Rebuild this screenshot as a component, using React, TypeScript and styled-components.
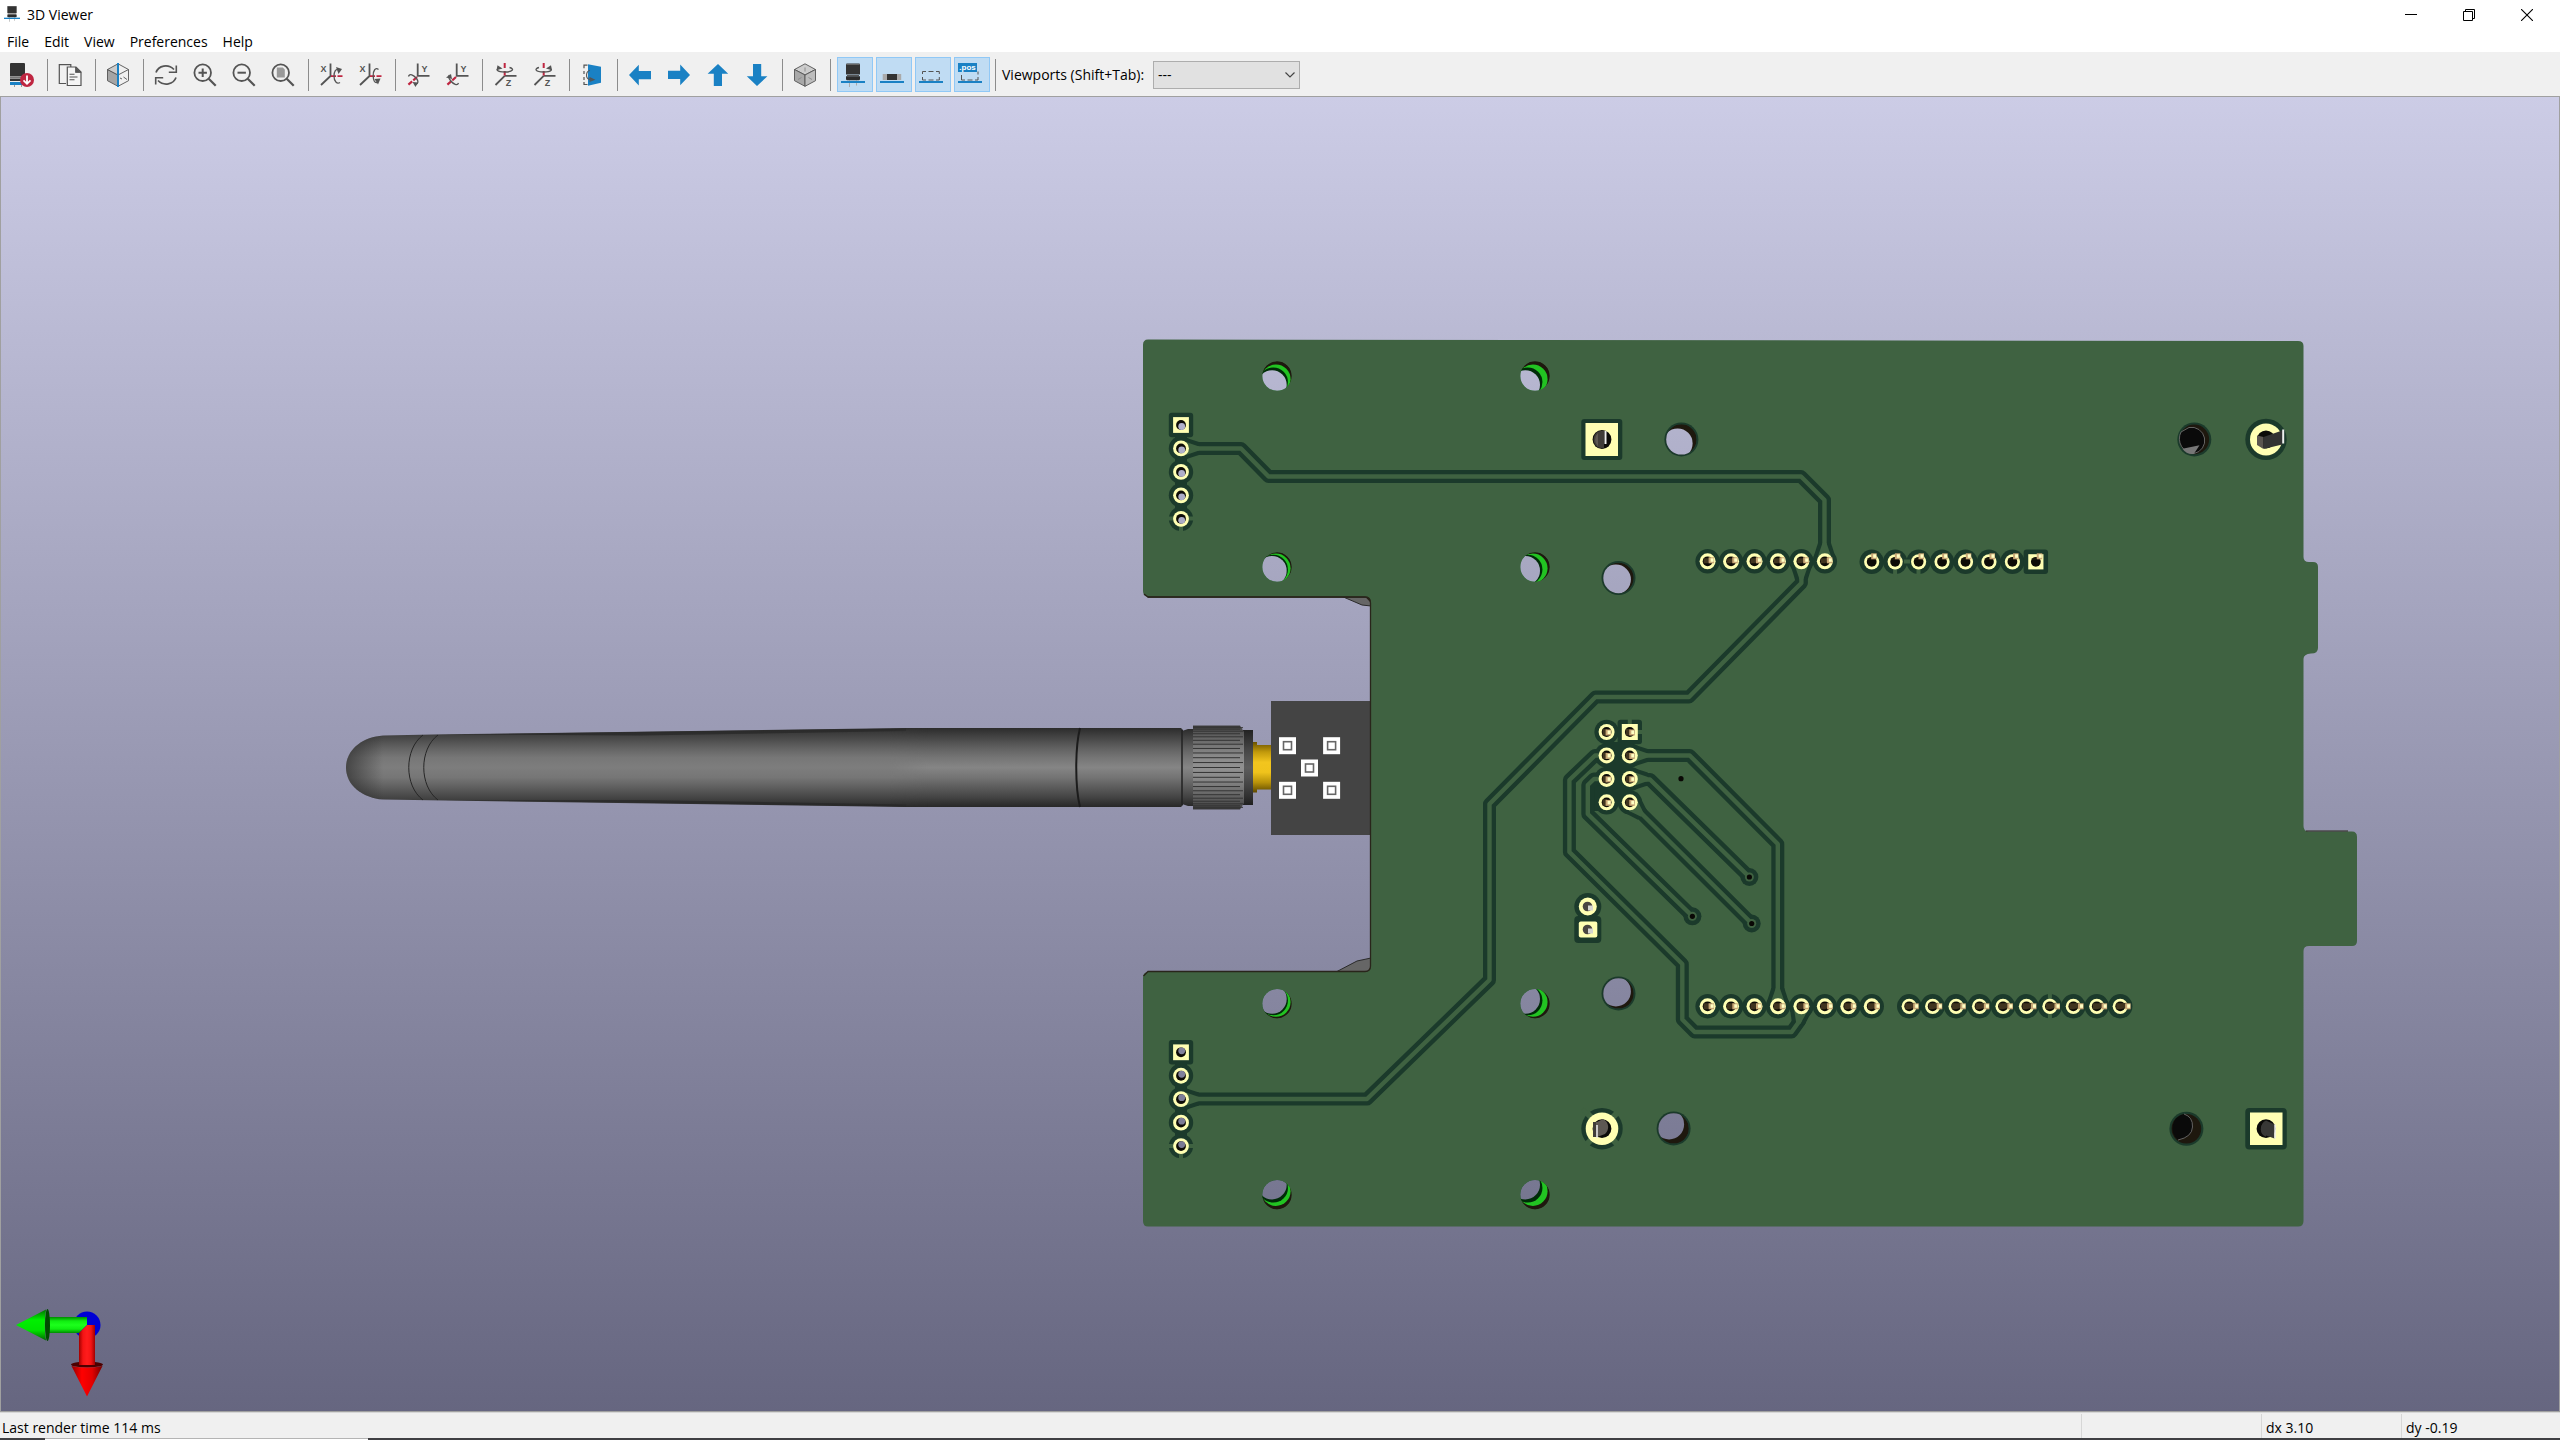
import React from "react";
import styled, { createGlobalStyle } from "styled-components";

const INK = "#545454";
const RED = "#bf2641";
const BLUE = "#1a81c4";
const BOARD = "#3f6241";
const CLEAR = "#1b3a2b";
const COPPER = "#ffffb3";
const BARREL = "#1e180e";

const Global = createGlobalStyle`
  * { box-sizing: border-box; }
  body { margin: 0; background: #f0f0f0; }
`;

const Window = styled.div`
  display: flex;
  flex-direction: column;
  height: 100vh;
  overflow: hidden;
  color: #000;
  font-family: "Open Sans", "Noto Sans", sans-serif;
  font-size: 14px;
  line-height: 20px;
`;

const TitleBar = styled.header`
  display: flex;
  align-items: center;
  height: 30px;
  padding: 0 4px;
  background: #fff;
`;

const AppIcon = styled.svg`
  width: 16px;
  height: 20px;
`;

const Title = styled.h1`
  flex: 1;
  margin: 0 0 0 7px;
  font: inherit;
`;

const CaptionButton = styled.button`
  display: grid;
  place-items: center;
  width: 58px;
  height: 28px;
  padding: 0;
  border: 0;
  background: none;
  svg { width: 12px; height: 12px; }
`;

const MenuBar = styled.nav`
  display: flex;
  gap: 1px;
  height: 22px;
  padding-top: 1px;
  background: #fff;
`;

const MenuItem = styled.button`
  padding: 0 7px;
  border: 0;
  background: none;
  color: inherit;
  font: inherit;
`;

const Toolbar = styled.div`
  display: flex;
  align-items: center;
  gap: 3px;
  height: 44px;
  padding: 1px 0 0 6px;
  background: #f0f0f0;
`;

const ToolButton = styled.button<{ $on?: boolean }>`
  flex: none;
  display: flex;
  width: 36px;
  height: 35px;
  padding: 5px 3px;
  border: 1px solid ${(p) => (p.$on ? "#90c8f6" : "transparent")};
  background: ${(p) => (p.$on ? "#c0dcf3" : "none")};
  svg { width: 24px; height: 24px; overflow: visible; }
`;

const Divider = styled.span`
  flex: none;
  width: 1px;
  height: 32px;
  margin: 0 3px 0 2px;
  background: #8c8c8c;
`;

const ViewportLabel = styled.label`
  margin: 0 6px 0 0;
  white-space: nowrap;
`;

const SelectBox = styled.div`
  display: grid;
  width: 147px;
  height: 28px;
  > * { grid-area: 1 / 1; }
  svg {
    justify-self: end;
    align-self: center;
    width: 10px;
    height: 6px;
    margin-right: 5px;
    pointer-events: none;
  }
`;

const Select = styled.select`
  appearance: none;
  padding: 0 4px;
  border: 1px solid #adadad;
  border-radius: 0;
  background: #e1e1e1;
  color: inherit;
  font: inherit;
`;

const Canvas = styled.main`
  flex: 1;
  min-height: 0;
  border: 1px solid #a0a0a0;
  background: linear-gradient(#cccce6, #666680);
  svg { display: block; width: 100%; height: 100%; }
`;

const StatusBar = styled.footer`
  display: grid;
  grid-template-columns: 1fr 180px 140px 159px;
  height: 26px;
  padding-top: 1px;
  border-top: 1px solid #d7d7d7;
  background: #f0f0f0;
`;

const Pane = styled.div`
  padding: 4px 4px 0;
  border-left: 1px solid #d7d7d7;
  &:first-child { padding-left: 2px; border-left: 0; }
`;

const Strip = styled.div`
  display: flex;
  height: 2px;
  padding-left: 45px;
  background: #404043;
  &::before { content: ""; width: 323px; border-top: 1px solid #b4b4b4; background: #fff; }
`;

/* ---------- toolbar icons ---------- */

type IconProps = { children: React.ReactNode };
const Icon = ({ children }: IconProps) => (
  <svg viewBox="0 0 24 24" fill="none" stroke={INK} strokeWidth="1.6" aria-hidden="true">{children}</svg>
);

const Letter = ({ x, y, c }: { x: number; y: number; c: string }) => (
  <text x={x} y={y} fill={INK} stroke="none" fontSize="9" fontWeight="700" textAnchor="middle">{c}</text>
);

const Capacitor = () => (
  <g stroke="none">
    <path d="M8 17.5h1v6.500H8zM15 17.500h1v5h-1z" fill="#aaa" />
    <path d="M5.500.5h13l.5 1.500v9.500H5V2z" fill="#333" />
    <path d="M5.500 1h13v1h-13z" fill="#666" />
    <path d="M6 12h12v1.300H6z" fill="#555" />
    <path d="M5 13.300h14v3.200l-1 .8H6l-1-.8z" fill="#2c2c2c" />
    <path d="M0 18h24v2H0z" fill={BLUE} />
  </g>
);

const ReloadBoard = () => (
  <Icon>
    <g stroke="none">
      <path d="M4 21h1v3H4zM11 21h1v3h-1z" fill="#999" />
      <path d="M.5 0h14l.5 1v12.500H0V1z" fill="#333" />
      <path d="M0 14h15v1H0z" fill="#777" />
      <path d="M0 15.500h13v2.500H0z" fill="#333" />
      <path d="M0 19h14v3H0z" fill={BLUE} />
      <circle cx="17" cy="17" r="7" fill={RED} />
    </g>
    <path d="M17 12.500v8M13.500 17.300l3.500 3.500 3.500-3.500" stroke="#fff" strokeWidth="1.800" />
  </Icon>
);

const CopyImage = () => (
  <Icon>
    <path d="M8 20.500H1.300V1.600h11.500V4" strokeWidth="1.200" />
    <path d="M9.300 4h8.700l5 5v13.500H9.300z" strokeWidth="1.200" fill="#f5f5f5" />
    <path d="M17.500 4v5.500H23z" fill={INK} strokeWidth=".8" />
    <path d="M11.500 11.300h5M11.500 14h8M11.500 16.700h5" strokeWidth="1.100" />
  </Icon>
);

const RaytraceCube = () => (
  <Icon>
    <path d="M1.500 6.500 12 12v11.300L1.500 17.700z" fill="#a5a5a5" strokeWidth=".9" />
    <path d="M1.500 6.500 12 .8v11.200z" fill="#ccc" strokeWidth=".9" />
    <path d="M12 .8l10.500 5.700v11.200L12 23.300M22.500 6.500 12 12M14 15l2 1M17.500 14l3.500 2.500" strokeWidth=".9" />
    <path d="M12 0v24" stroke={BLUE} strokeWidth="2" />
  </Icon>
);

const Refresh = () => (
  <Icon>
    <path d="M2 9.500C4.500 2.500 14 .5 20 6.500M22 14.500C19.500 21.500 10 23.500 4 17.500" strokeWidth="1.700" />
    <path d="M22.300 2.500v6.800h-7.500M1.700 21.500v-6.800h7.500" strokeWidth="1.600" />
  </Icon>
);

const Zoom = ({ children }: IconProps) => (
  <Icon>
    {children}
    <circle cx="9.700" cy="9.700" r="8.300" strokeWidth="1.800" />
    <path d="M15.700 15.700l7 7" strokeWidth="2.200" />
  </Icon>
);

const RotateX = ({ ccw }: { ccw?: boolean }) => (
  <Icon>
    <Letter x={4.500} y={8.500} c="X" />
    <path d="M11.500.5v12.500L2 22" strokeWidth="1.800" />
    <path d="M12 13.200h11.500" stroke={RED} strokeWidth="1.800" strokeDasharray="5 1.500" />
    {ccw ? (
      <>
        <path d="M20.500 6.500c-3-2.500-5.500 1-5.300 6.500.1 4 1.300 7 3.800 6.500" strokeWidth="1.300" />
        <path d="M16.500 16l6-.5-2.500 6z" fill={INK} stroke="none" />
      </>
    ) : (
      <>
        <path d="M21 19.500c-3 2-6-1-6-6.500 0-4.500 2-7.500 4.500-6.500" strokeWidth="1.300" />
        <path d="M17 4l6 2-3.500 5z" fill={INK} stroke="none" />
      </>
    )}
  </Icon>
);

const RotateY = ({ ccw }: { ccw?: boolean }) => (
  <Icon>
    <Letter x={18.500} y={8.500} c="Y" />
    <path d="M11.700.5v12.300H23.500" strokeWidth="1.800" />
    <path d="M11 14l-9 8" stroke={RED} strokeWidth="2.200" strokeDasharray="5 1.500" />
    {ccw ? (
      <>
        <path d="M13.500 20c-1 3-5 1.500-8-2.500-2-2.500-2.500-4.500-1-5.500" strokeWidth="1.300" />
        <path d="M1 14.500l5-3.500 1 5z" fill={INK} stroke="none" />
      </>
    ) : (
      <>
        <path d="M2.500 13.500c1-3.500 5-1.500 8 2 2 2.500 2 5-.5 6" strokeWidth="1.300" />
        <path d="M6.500 19l5.500.5-2.500 4.500z" fill={INK} stroke="none" />
      </>
    )}
  </Icon>
);

const RotateZ = ({ ccw }: { ccw?: boolean }) => (
  <Icon>
    <Letter x={15.500} y={22.500} c="Z" />
    <path d="M11.700 12.800H23.500M11.700 12.800 2.500 22" strokeWidth="1.800" />
    <path d="M11.700 0v5M11.700 8v4.500" stroke={RED} strokeWidth="2" />
    {ccw ? (
      <>
        <path d="M7 4.500c-5 1.200-4 4.500 4.700 4.500 8 0 9.500-2.500 5.500-4" strokeWidth="1.300" />
        <path d="M14 5.500l5-3.300 1 5z" fill={INK} stroke="none" />
      </>
    ) : (
      <>
        <path d="M16.500 4.500c5 1.200 4 4.500-4.700 4.500-8 0-9.500-2.500-5.500-4" strokeWidth="1.300" />
        <path d="M9.500 5.500l-5-3.300-1 5z" fill={INK} stroke="none" />
      </>
    )}
  </Icon>
);

const FlipBoard = () => (
  <Icon>
    <path d="M8 1.300 21 3.800v16L8 22.800z" fill={BLUE} stroke="none" />
    <path d="M7.500 2.200H4v3M4 8v3M4 14v3M4 19v2.500h3.500" strokeWidth="1.200" />
    <path d="M10 7.500c-4 .5-5 7.500-.5 9l4 .3M10 14.800l4 2-4 1.500z" strokeWidth="1.100" />
  </Icon>
);

const Arrow = ({ turn }: { turn: number }) => (
  <Icon>
    <path d="M1 12 10.800 1.800V8H23v8.200H10.800v6.200z" transform={`rotate(${turn} 12 12)`} fill={BLUE} stroke="none" />
  </Icon>
);

const OrthoCube = () => (
  <Icon>
    <path d="M12 .8 22.500 6.500 12 12 1.500 6.500z" fill="#ccc" strokeWidth=".9" />
    <path d="M1.500 6.500 12 12v11.300L1.500 17.700z" fill="#a8a8a8" strokeWidth=".9" />
    <path d="M22.500 6.500 12 12v11.300l10.500-5.600z" fill="#bdbdbd" strokeWidth=".9" />
    <path d="M12 4.500v4M5 16.500l3.500-2M15.500 14.500l3.500 2" stroke="#888" strokeWidth=".9" />
  </Icon>
);

const SmdPart = () => (
  <Icon>
    <g stroke="none">
      <path d="M2.700 11h18.500v6H2.700z" fill="#aaa" />
      <path d="M7 11h10v6H7z" fill="#333" />
      <path d="M0 18h24v2H0z" fill={BLUE} />
    </g>
  </Icon>
);

const VirtualPart = () => (
  <Icon>
    <path d="M3.500 11V8.500H7M9.500 8.500h5M17 8.500h3.300V11M3.500 14v3H7M9.500 17h5M17 17h3.300v-3" strokeWidth="1" />
    <path d="M0 19h24" stroke={BLUE} strokeWidth="2" />
  </Icon>
);

const PosPart = () => (
  <Icon>
    <path d="M3.500 12v5H7M9.500 17h5M17 17h3v-3M20 11.500V8.500" strokeWidth="1" />
    <path d="M0 0h19v9H0z" fill={BLUE} stroke="none" />
    <text x="9.500" y="6.500" fontSize="8" fontWeight="700" fill="#fff" stroke="none" textAnchor="middle">.pos</text>
    <path d="M0 19h24" stroke={BLUE} strokeWidth="2" />
  </Icon>
);

type Tool = { name: string; icon: React.ReactNode; on?: boolean };
const toolGroups: Tool[][] = [
  [{ name: "Reload board", icon: <ReloadBoard /> }],
  [{ name: "Copy 3D image", icon: <CopyImage /> }],
  [{ name: "Raytracing", icon: <RaytraceCube /> }],
  [
    { name: "Redraw", icon: <Refresh /> },
    { name: "Zoom in", icon: <Zoom><path d="M9.700 5.500v8.400M5.500 9.700h8.400" strokeWidth="2" /></Zoom> },
    { name: "Zoom out", icon: <Zoom><path d="M5.500 9.700h8.400" strokeWidth="2" /></Zoom> },
    { name: "Zoom to fit", icon: <Zoom><path d="M5.800 4.500h6l2 2v8h-8z" fill="#999" stroke="none" /></Zoom> },
  ],
  [{ name: "Rotate X clockwise", icon: <RotateX /> }, { name: "Rotate X counterclockwise", icon: <RotateX ccw /> }],
  [{ name: "Rotate Y clockwise", icon: <RotateY /> }, { name: "Rotate Y counterclockwise", icon: <RotateY ccw /> }],
  [{ name: "Rotate Z clockwise", icon: <RotateZ /> }, { name: "Rotate Z counterclockwise", icon: <RotateZ ccw /> }],
  [{ name: "Flip board", icon: <FlipBoard /> }],
  [
    { name: "Pan left", icon: <Arrow turn={0} /> },
    { name: "Pan right", icon: <Arrow turn={180} /> },
    { name: "Pan up", icon: <Arrow turn={90} /> },
    { name: "Pan down", icon: <Arrow turn={270} /> },
  ],
  [{ name: "Orthographic projection", icon: <OrthoCube /> }],
  [
    { name: "Through-hole models", icon: <Icon><Capacitor /></Icon>, on: true },
    { name: "SMD models", icon: <SmdPart />, on: true },
    { name: "Virtual models", icon: <VirtualPart />, on: true },
    { name: "Models not in position file", icon: <PosPart />, on: true },
  ],
];

/* ---------- board scene ---------- */

const P = 23.45;
const row = (x: number, y: number, n: number) => Array.from({ length: n }, (_, i) => ({ x: x + i * P, y }));
const column = (x: number, y: number, n: number) => Array.from({ length: n }, (_, i) => ({ x, y: y + i * P }));

type PinKind = "open" | "pin";
type PadSpec = { x: number; y: number; sq?: boolean; kind: PinKind; dx: number; dy: number; r: number; ring: number };

const pads: PadSpec[] = [
  ...column(1181, 425, 5).map((p, i) => ({ ...p, sq: i === 0, kind: "open" as const, dx: 1, dy: 1.500, r: 7.900, ring: 12.200 })),
  ...column(1181, 1052.300, 5).map((p, i) => ({ ...p, sq: i === 0, kind: "open" as const, dx: 1, dy: -1.500, r: 7.900, ring: 12.200 })),
  ...row(1707.600, 561.300, 6).map((p, i) => ({ ...p, kind: "pin" as const, dx: 3.500 + i * 0.200, dy: -1.500, r: 8, ring: 12.200 })),
  ...row(1871.700, 561.800, 8).map((p, i) => ({ ...p, sq: i === 7, kind: "pin" as const, dx: 2 + i * 0.200, dy: -6, r: 7.600, ring: 12.200 })),
  ...row(1707.600, 1006.300, 8).map((p, i) => ({ ...p, kind: "pin" as const, dx: 3.500 + i * 0.250, dy: -0.500, r: 8, ring: 12.200 })),
  ...row(1909.200, 1006.300, 10).map((p, i) => ({ ...p, kind: "pin" as const, dx: 6.500 + i * 0.100, dy: -0.500, r: 7.600, ring: 12.200 })),
  ...column(1606.600, 732, 4).map((p) => ({ ...p, kind: "pin" as const, dx: 1.500, dy: 0, r: 8, ring: 12.200 })),
  ...column(1629.800, 732, 4).map((p, i) => ({ ...p, sq: i === 0, kind: "pin" as const, dx: 2, dy: 0, r: 8, ring: 12.200 })),
];

const tracks = [
  "M1181 448.500H1241L1268.500 476.500H1801L1824.500 500V561",
  "M1801.400 561V583L1689 697H1595.500L1489.500 804V980L1367 1099H1181",
  "M1629.500 755.500H1689.700L1777.800 844V1006",
  "M1629.500 779.500H1650L1749.400 877",
  "M1629.500 802.500L1642 814 1751.700 923.500",
  "M1606.600 755.500H1595L1569.400 780V852L1682.300 964V1019.500L1694.700 1032H1791.600L1799.500 1021 1801.400 1006",
  "M1606.600 779H1594L1587.800 785V814L1692.400 916.300",
];

/* Copper flare between a pad and its track, pointing along the given angle. */
const flares = [
  { x: 1181, y: 448.500, a: 0 }, { x: 1181, y: 1099, a: 0 },
  { x: 1824.500, y: 561, a: -90 }, { x: 1801.400, y: 561, a: 90 },
  { x: 1629.800, y: 755.500, a: 0 }, { x: 1629.800, y: 779, a: 0 }, { x: 1629.800, y: 802.500, a: 45 },
  { x: 1777.800, y: 1006, a: -90 }, { x: 1801.400, y: 1006, a: 100 },
];

const vias = [
  { x: 1749.400, y: 877 }, { x: 1692.400, y: 916.300 }, { x: 1751.700, y: 923.500 },
];

const mountHoles = [376, 567, 1003.700, 1194.700].flatMap((y, i) =>
  [1277, 1535].map((x, j) => ({ x, y, sx: [-5, -9.700][j], sy: [9, 3.700, -4.700, -10][i] })));

const plainHoles = [
  { x: 1681.400, y: 439.400, sx: -3.800, sy: 4 },
  { x: 1618.500, y: 578, sx: -2.600, sy: 1.500 },
  { x: 1618.500, y: 993.400, sx: -2.600, sy: -2 },
  { x: 1673.600, y: 1128.400, sx: -4.500, sy: -4 },
];

const MountHole = ({ x, y, sx, sy, id }: { x: number; y: number; sx: number; sy: number; id: string }) => (
  <g>
    <clipPath id={id}><circle cx={x} cy={y} r="14.700" /></clipPath>
    <g clipPath={`url(#${id})`}>
      <circle cx={x} cy={y} r="15" fill={BARREL} />
      <circle cx={x + sx * 0.220} cy={y + sy * 0.350} r="14.700" fill="#22c322" />
      <circle cx={x + sx * 0.750} cy={y + sy * 0.680} r="14.700" fill="#002b08" />
      <circle cx={x + sx} cy={y + sy} r="14.700" fill="url(#sky)" />
    </g>
  </g>
);

const PlainHole = ({ x, y, sx, sy, id }: { x: number; y: number; sx: number; sy: number; id: string }) => (
  <g>
    <clipPath id={id}><circle cx={x} cy={y} r="15.200" /></clipPath>
    <circle cx={x} cy={y} r="17" fill={CLEAR} />
    <g clipPath={`url(#${id})`}>
      <circle cx={x} cy={y} r="15.200" fill={BARREL} />
      <circle cx={x + sx} cy={y + sy} r="15" fill="url(#sky)" />
    </g>
  </g>
);

const Ring = ({ x, y, sq, ring }: PadSpec) =>
  sq ? <rect x={x - ring} y={y - ring} width={ring * 2} height={ring * 2} rx="3" /> : <circle cx={x} cy={y} r={ring} />;

const Pad = ({ x, y, sq, kind, dx, dy, r }: PadSpec) => (
  <g>
    {sq ? <rect x={x - r} y={y - r} width={r * 2} height={r * 2} fill={COPPER} /> : <circle cx={x} cy={y} r={r} fill={COPPER} />}
    <circle cx={x} cy={y} r="4.900" fill="#0d0b06" />
    {kind === "open" && <circle cx={x + dx * 0.700} cy={y + dy} r="3.400" fill="url(#sky)" />}
    {kind === "pin" && (
      <>
        <path d={`M${x - 4} ${y - 3}h5l${dx - 2} ${dy}v5l-${dx - 1} 1.500h-4z`} fill="#40341f" />
        <rect x={x + dx - 2.500} y={y + dy - 2.500} width="5.500" height="6" fill="#c9a877" />
        <rect x={x + dx - 0.500} y={y + dy - 1.500} width="3" height="3.500" fill="#ffffc4" />
      </>
    )}
  </g>
);

const whitePads = [[1287.500, 745.700], [1331.600, 745.700], [1309.500, 768], [1287.500, 790.300], [1331.600, 790.300]];

const Antenna = () => (
  <g>
    <path d="M383 735.500C362 737 346 750 346 767.500S362 798 383 799.600L445 800.500 906 807H1080V728H906L445 734.300Z" fill="url(#rod)" />
    <path d="M383 735.500C362 737 346 750 346 767.500S362 798 383 799.600Z" fill="url(#tip)" />
    <path d="M445 734.500 906 728.500V731L640 735.500ZM445 800.200 906 806.500V804.500L640 800Z" fill="#262626" opacity=".7" />
    <path d="M890 728H1080V807H890Z" fill="url(#shine)" mask="url(#blend)" />
    <path d="M423 735C404 749 404 786 423 800M438 735C419 749 419 786 438 800" fill="none" stroke="#262626" />
    <path d="M1081 728H1181L1183 730V805L1181 807H1081Z" fill="url(#shine)" />
    <path d="M1080 728C1075 748 1075 787 1080 807L1083 807V728Z" fill="url(#shine)" />
    <path d="M1080 728C1075 748 1075 787 1080 807" fill="none" stroke="#1c1c1c" strokeWidth="2" />
    <path d="M1182 731 1188 729H1193V806H1188L1182 804Z" fill="url(#shine)" />
    <path d="M1182 730V805" stroke="#222" strokeWidth="1.500" />
    <path d="M1243 730H1253V805H1243Z" fill="url(#shine)" />
    <path d="M1243 730H1253V805H1243Z" fill="#111" opacity=".35" />
    <path d="M1193 725.500H1240L1244 732V803L1240 809.500H1193Z" fill="url(#knurl)" />
    {Array.from({ length: 25 }, (_, i) => {
      const y = 767.500 + 41 * Math.sin(((i - 12) / 12) * 1.450);
      return <path key={i} d={`M1193 ${y}H${1240 + (i % 2) * 3}`} stroke="#343434" strokeWidth="1" />;
    })}
    <path d="M1253 742H1257V745H1271V789.500H1257V792.500H1253Z" fill="url(#gold)" />
    <path d="M1271 701H1370V835H1271Z" fill="#444" />
    {whitePads.map(([x, y]) => (
      <g key={`${x}-${y}`}>
        <rect x={x - 8.500} y={y - 8.500} width="17" height="17" fill="#fff" />
        <rect x={x - 4} y={y - 4} width="8" height="8" fill="#fff" stroke="#666" strokeWidth="1.600" />
      </g>
    ))}
  </g>
);

const Board = () => (
  <g>
    <path d="M1341 596 1362 605 1371 606V596ZM1336 972 1357 961 1371 958V972Z" fill="#666" stroke="#2a2a2a" />
    <path d="M1148 341H2298V1224H1148L1144 1220V977L1148 972.500 1366 972.500 1371 967V603L1366 597.800H1148L1144 593Z" fill="#29251b" />
    <path
      d="M1148 339.500 2298 341Q2303.500 341 2303.500 346V557Q2303.500 562 2309 562H2313Q2318 562 2318 567V648Q2318 653.500 2311 653.500Q2303.500 654 2303.500 659V826Q2303.500 831.500 2309 831.500H2352Q2357 831.500 2357 837V941Q2357 946 2352 946H2309Q2303.500 946 2303.500 951V1221Q2303.500 1226.500 2298 1226.500H1148Q1143 1226.500 1143 1221V978Q1143 972 1148 972H1365Q1370.500 971 1370.500 966V602Q1370.500 596.500 1365 596.500H1148Q1143 596.500 1143 591V345Q1143 339.500 1148 339.500Z"
      fill={BOARD}
    />
    <path d="M1144 594 1148 597H1365Q1370.500 597 1370.500 603V966Q1370.500 971.500 1365 971.500H1148L1143.500 976" fill="none" stroke="#29251b" strokeWidth="1.300" />
    <path d="M2306 831H2348" stroke="#29251b" />

    <g fill={CLEAR}>
      {pads.map((p) => <Ring key={`${p.x}-${p.y}`} {...p} />)}
      {vias.map((v) => <circle key={v.x} cx={v.x} cy={v.y} r="9" />)}
      <rect x="1606" y="742" width="24" height="61" />
      <rect x="1592" y="785" width="20" height="26" />
      <path d="M1175 430h12v88h-12zM1175 1060h12v85h-12z" />
      <circle cx="1587.800" cy="906.500" r="13.500" />
      <rect x="1574.300" y="916" width="27" height="27" rx="4" />
      <rect x="1581.300" y="419" width="41" height="41" rx="3" />
      <circle cx="1602" cy="1128.700" r="20.700" />
      <circle cx="2266" cy="439.400" r="20.700" />
      <rect x="2245.300" y="1108" width="41.500" height="41.500" rx="4" />
    </g>
    <path d="M1586 1112l32 33M1618 1112l-32 33" stroke={BOARD} strokeWidth="6" />
    <path d="M1587.500 1114.200l-5-5M1181 521v13M1168 518.500h7M1187 518.500h7M1181 1148v13M1168 1146h7M1187 1146h7M1895.100 566v12M1918.500 566v12M1904 561.500h6M2049.900 992v28M1629.800 718v8M1636 732h8" stroke={BOARD} strokeWidth="4" />
    <g fill="none" stroke={CLEAR} strokeWidth="13" strokeLinejoin="round">
      {tracks.map((d) => <path key={d} d={d} />)}
    </g>
    <g fill={CLEAR}>
      {flares.map((f) => <path key={`${f.x}${f.y}`} d="M4-11 18-6.500V6.500L4 11Z" transform={`translate(${f.x} ${f.y}) rotate(${f.a})`} />)}
    </g>
    <g fill="none" stroke={BOARD} strokeWidth="4.400" strokeLinejoin="round">
      {tracks.map((d) => <path key={d} d={d} />)}
    </g>
    <g fill={BOARD}>
      {flares.map((f) => <path key={`${f.x}${f.y}`} d="M5-6.500 18-2V2L5 6.500Z" transform={`translate(${f.x} ${f.y}) rotate(${f.a})`} />)}
      {vias.map((v) => <circle key={v.x} cx={v.x} cy={v.y} r="4.500" />)}
    </g>
    <g fill="#0a0805">
      {vias.map((v) => <circle key={v.x} cx={v.x} cy={v.y} r="2.600" />)}
      <circle cx="1681" cy="778.700" r="2.600" />
    </g>

    {mountHoles.map((h, i) => <MountHole key={i} id={`mount${i}`} {...h} />)}
    {plainHoles.map((h, i) => <PlainHole key={i} id={`plain${i}`} {...h} />)}
    {pads.map((p) => <Pad key={`${p.x}-${p.y}`} {...p} />)}

    <circle cx="1587.800" cy="906.500" r="9" fill={COPPER} />
    <rect x="1578.800" y="921.500" width="18.500" height="16" rx="2" fill={COPPER} />
    {[906.500, 929.500].map((y) => (
      <g key={y}>
        <circle cx="1587.500" cy={y} r="4.800" fill="#4a4642" />
        <path d={`M1588 ${y - 1}h5v5h-5z`} fill="#d5d5d0" />
      </g>
    ))}

    <rect x="1585.500" y="423" width="32.500" height="33" fill={COPPER} />
    <circle cx="1602" cy="439.500" r="9.400" fill="#0b0b09" />
    <path d="M1598 431.500A9.400 9.400 0 0 0 1598 447.500L1604 448.500V430.500Z" fill="#3f3c39" />
    <path d="M1598 433A9.400 9.400 0 0 0 1598 446.500Z" fill="#5d5853" />
    <path d="M1605.500 431v13" stroke="#eee" strokeWidth="2" />

    <circle cx="1602" cy="1128.700" r="16.300" fill={COPPER} />
    <circle cx="1602" cy="1128.700" r="9.400" fill="#0b0b09" />
    <path d="M1593 1122h4l6-3a9 9 0 0 1 2 15l-8 3h-4z" fill="#5d5853" />
    <path d="M1593 1122h3v15h-3z" fill="#3f3c39" />
    <path d="M1597 1125v13" stroke="#eee" strokeWidth="1.500" />

    <circle cx="2266" cy="439.400" r="16" fill={COPPER} />
    <circle cx="2266" cy="439.400" r="9" fill="#0b0b09" />
    <path d="M2257 435.500l6.500 1.500v12l-6.500-4z" fill="#5a5550" />
    <path d="M2263.500 437l18.700-6.500v14l-18.700 4.500z" fill="#333" />
    <path d="M2283.200 429.500v14" stroke="#eee" strokeWidth="2" />

    <rect x="2250" y="1112.500" width="32.500" height="32.500" fill={COPPER} />
    <circle cx="2266" cy="1128.700" r="9.400" fill="#0b0b09" />
    <path d="M2266 1120.500l8.500 4v14l-8.500-3a8.300 8.300 0 0 1 0-15z" fill="#383836" />
    <path d="M2266 1136.700a8 8 0 0 1 0-15z" fill="#383836" />
    <path d="M2275 1124.500v14" stroke="#eee" strokeWidth="1.500" />

    <circle cx="2194.300" cy="439.400" r="17" fill={CLEAR} />
    <circle cx="2194.300" cy="439.400" r="14.800" fill={BARREL} />
    <path d="M2189 427.500A12 12 0 0 1 2194 453.500 14.800 14.800 0 0 1 2181 432Z" fill="#0a0a0a" stroke="#777" strokeWidth=".8" />
    <path d="M2182.500 448.700 2199.500 445.200 2194 453.800Q2187 455 2182.500 448.700Z" fill="#777" />
    <circle cx="2186.400" cy="1128.700" r="17" fill={CLEAR} />
    <circle cx="2186.400" cy="1128.700" r="14.800" fill={BARREL} />
    <path d="M2184 1114Q2193 1117 2192.500 1127T2178 1140A14.800 14.800 0 0 1 2184 1114Z" fill="#0a0a0a" />
    <path d="M2184 1114Q2193 1117 2192.500 1127T2178 1140" fill="none" stroke="#777" strokeWidth=".8" />
  </g>
);

const AxisGizmo = () => (
  <g>
    <circle cx="87" cy="1325" r="13.500" fill="#0000d4" />
    <path d="M46 1317H87V1325L79 1333H46Z" fill="url(#axisY)" />
    <ellipse cx="47.500" cy="1325" rx="2.500" ry="16" fill="#004c00" />
    <path d="M16 1325 46 1309.500Q43.500 1325 46 1340.500Z" fill="url(#coneY)" />
    <path d="M79 1333 87 1325H95V1367H79Z" fill="url(#axisX)" />
    <ellipse cx="87" cy="1364.500" rx="16" ry="3" fill="#4c0000" />
    <path d="M79 1355H95V1365H79Z" fill="url(#axisX)" />
    <path d="M71.500 1366Q87 1369 102.500 1366L87 1396.500Z" fill="url(#coneX)" />
  </g>
);

const Shade = ({ id, stops, across }: { id: string; stops: string[]; across?: boolean }) => (
  <linearGradient id={id} x1="0" y1="0" x2={across ? 1 : 0} y2={across ? 0 : 1}>
    {stops.map((c, i) => <stop key={i} offset={i / (stops.length - 1)} stopColor={c} />)}
  </linearGradient>
);

const Scene = () => (
  <svg viewBox="1 97 2558 1314" preserveAspectRatio="xMidYMid slice" role="img" aria-label="3D board view">
    <defs>
      <linearGradient id="sky" gradientUnits="userSpaceOnUse" x1="0" y1="97" x2="0" y2="1411">
        <stop offset="0" stopColor="#cccce6" />
        <stop offset="1" stopColor="#666680" />
      </linearGradient>
      <Shade id="rod" stops={["#303030", "#484848", "#626262", "#777", "#7d7d7d", "#767676", "#5f5f5f", "#464646", "#2b2b2b"]} />
      <Shade id="shine" stops={["#2c2c2c", "#464646", "#606060", "#757575", "#858585", "#747474", "#5c5c5c", "#444", "#282828"]} />
      <Shade id="knurl" stops={["#444", "#606060", "#787878", "#8a8a8a", "#909090", "#8a8a8a", "#747474", "#5c5c5c", "#404040"]} />
      <linearGradient id="fade">
        <stop offset="0" stopColor="#000" />
        <stop offset=".2" stopColor="#fff" />
      </linearGradient>
      <mask id="blend"><rect x="890" y="720" width="190" height="95" fill="url(#fade)" /></mask>
      <linearGradient id="tip">
        <stop offset="0" stopColor="#222" stopOpacity=".6" />
        <stop offset="1" stopColor="#222" stopOpacity="0" />
      </linearGradient>
      <Shade id="gold" stops={["#6a5200", "#c29a0c", "#f2c51e", "#f0c31c", "#b8920a", "#5e4900"]} />
      <Shade id="axisY" stops={["#008a00", "#10ee10", "#1cff1c", "#10ee10", "#008a00"]} />
      <Shade id="coneY" stops={["#007000", "#00f000", "#00e400", "#006800"]} />
      <Shade id="axisX" across stops={["#a00000", "#f41414", "#ff1c1c", "#f41414", "#a00000"]} />
      <Shade id="coneX" across stops={["#900000", "#ff0000", "#e40000", "#700000"]} />
    </defs>
    <Antenna />
    <Board />
    <AxisGizmo />
  </svg>
);

export default function App() {
  return (
    <Window>
      <Global />
      <TitleBar>
        <AppIcon viewBox="0 0 24 28" aria-hidden="true"><Capacitor /></AppIcon>
        <Title>3D Viewer</Title>
        <CaptionButton aria-label="Minimize">
          <svg viewBox="0 0 12 12"><path d="M0 5.500h12" stroke="#000" /></svg>
        </CaptionButton>
        <CaptionButton aria-label="Restore">
          <svg viewBox="0 0 12 12" fill="none" stroke="#000"><path d="M.5 2.500h9v9h-9zM2.500 2.500v-2h9v9h-2" /></svg>
        </CaptionButton>
        <CaptionButton aria-label="Close">
          <svg viewBox="0 0 12 12"><path d="M0 0l12 12M12 0 0 12" stroke="#000" strokeWidth="1.100" /></svg>
        </CaptionButton>
      </TitleBar>
      <MenuBar>
        {["File", "Edit", "View", "Preferences", "Help"].map((m) => <MenuItem key={m}>{m}</MenuItem>)}
      </MenuBar>
      <Toolbar>
        {toolGroups.map((group, i) => (
          <React.Fragment key={i}>
            {group.map((t) => (
              <ToolButton key={t.name} $on={t.on} aria-label={t.name} aria-pressed={t.on}>{t.icon}</ToolButton>
            ))}
            <Divider />
          </React.Fragment>
        ))}
        <ViewportLabel htmlFor="viewport">Viewports (Shift+Tab):</ViewportLabel>
        <SelectBox>
          <Select id="viewport" defaultValue="none"><option value="none">---</option></Select>
          <svg viewBox="0 0 10 6" fill="none" stroke="#444" strokeWidth="1.200"><path d="M.5.5 5 5 9.500.5" /></svg>
        </SelectBox>
      </Toolbar>
      <Canvas><Scene /></Canvas>
      <StatusBar>
        <Pane>Last render time 114 ms</Pane>
        <Pane />
        <Pane>dx 3.10</Pane>
        <Pane>dy -0.19</Pane>
      </StatusBar>
      <Strip />
    </Window>
  );
}
